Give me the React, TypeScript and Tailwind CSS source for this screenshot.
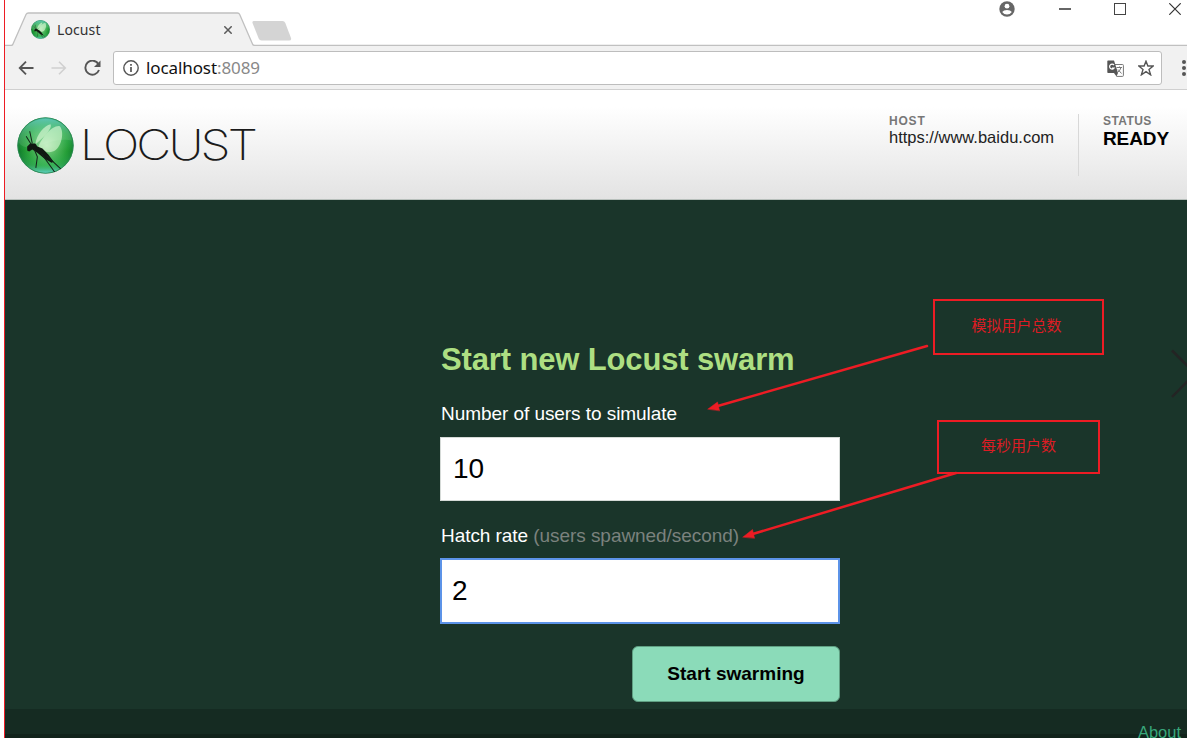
import type { ReactNode } from "react";

function LocustBall({ className, id }: { className: string; id: string }) {
  return (
    <svg viewBox="0 0 56 56" className={className} aria-hidden="true">
      <defs>
        <radialGradient id={`${id}-body`} cx="0.52" cy="0.5" r="0.52">
          <stop offset="0" stopColor="#c6f4c4" />
          <stop offset="0.35" stopColor="#6fd078" />
          <stop offset="0.72" stopColor="#2ba83c" />
          <stop offset="1" stopColor="#0f7a2e" />
        </radialGradient>
        <linearGradient id={`${id}-rim`} x1="0" y1="0" x2="0" y2="1">
          <stop offset="0" stopColor="#4fc4b4" stopOpacity="0.95" />
          <stop offset="0.28" stopColor="#4fc48a" stopOpacity="0.35" />
          <stop offset="0.6" stopColor="#0c7a20" stopOpacity="0.25" />
          <stop offset="0.85" stopColor="#45bd73" stopOpacity="0.4" />
          <stop offset="1" stopColor="#64d8d0" stopOpacity="0.95" />
        </linearGradient>
      </defs>
      <circle cx="28" cy="28" r="27.6" fill={`url(#${id}-body)`} />
      <circle cx="28" cy="28" r="27.2" fill={`url(#${id}-rim)`} stroke="#2f8a5c" strokeWidth="0.7" />
      <path d="M1.5 25C8 33 17 30 28 26C39 22 48 22 54 23C52 10 41 2 28 2C14 2 3 11 1.5 25Z" fill="#fff" opacity="0.1" />
      <path d="M18 27C19 17 27 8 33 7C35 11 27 19 18 27Z" fill="#dcf8d6" opacity="0.65" />
      <path d="M21 29C25 20 34 8 42 9C47 14 44 31 35 34C30 36 24 33 21 29Z" fill="#e2fbdc" opacity="0.6" />
      <path d="M10 29L13 26L18 26L20 29L25 31L31 37L36 44L34 45L27 41L20 35L15 32L12 34L10 33Z" fill="#101812" />
      <path d="M14 27L9 19M15 26L12.5 14M17 32L20 39L18.5 50M24 36L37 54M29 38L43 51" fill="none" stroke="#13241a" strokeWidth="1" />
    </svg>
  );
}

function TabStrip() {
  return (
    <div className="relative flex h-[46px] shrink-0 justify-between bg-white">
      <svg className="absolute inset-0 h-[46px] w-full" aria-hidden="true">
        <path d="M0 45.5H6Q7.500 45.500 8 44L21 14.500Q21.700 13 23.500 13H232.500Q234 13 234.700 14.500L247.500 44Q248 45.500 250 45.500H1200V48H0Z" fill="#f1f1f1" />
        <path d="M0 45.500H6Q7.500 45.500 8 44L21 14.500Q21.700 13 23.500 13H232.500Q234 13 234.700 14.500L247.500 44Q248 45.500 250 45.500H1200" fill="none" stroke="#c0c0c0" strokeWidth="1.300" />
        <path d="M249 21H277.500Q279.500 21 280.300 23L286 38Q286.800 40.500 284 40.500H256.500Q254.500 40.500 253.700 38.500L247.500 23Q247 21 249 21Z" fill="#d4d4d4" />
      </svg>
      <div className="relative flex h-[33px] w-[230px] items-center self-end pl-[26px]">
        <LocustBall id="tab" className="size-[19px]" />
        <span className="ml-[7px] font-['Noto_Sans',sans-serif] text-[14px] leading-5 tracking-[0.1px] text-[#333]">Locust</span>
        <svg viewBox="0 0 8 8" className="ml-auto mr-[3px] size-2" stroke="#5a5a5a" strokeWidth="1.5" aria-hidden="true">
          <path d="M0.300 0.300L7.700 7.700M7.700 0.300L0.300 7.700" />
        </svg>
      </div>
      <div className="relative flex h-[17px] items-center">
        <svg viewBox="0 0 16 16" className="mr-[44px] size-4" aria-hidden="true">
          <circle cx="8" cy="8" r="7.700" fill="#666" />
          <circle cx="8" cy="5.200" r="2.400" fill="#fff" />
          <path d="M3.200 11Q4.500 9 8 9Q11.500 9 12.800 11Q11 13.500 8 13.500Q5 13.500 3.200 11Z" fill="#fff" />
        </svg>
        <span className="mr-[43px] h-[2px] w-[12px] bg-[#666]" />
        <span className="mr-[43px] size-[12px] border border-[#444]" />
        <svg viewBox="0 0 12 12" className="mr-[6px] size-3" stroke="#333" strokeWidth="1.200" aria-hidden="true">
          <path d="M0.300 0.300L11.700 11.700M11.700 0.300L0.300 11.700" />
        </svg>
      </div>
    </div>
  );
}

function AddressBar() {
  return (
    <div className="flex h-[44px] shrink-0 items-center border-b border-[#d0d0d0] bg-[#f1f1f1] pl-[13px]">
      <svg viewBox="0 0 16 14" className="mr-[17px] h-[14px] w-4" fill="none" stroke="#555" strokeWidth="1.800" aria-hidden="true">
        <path d="M15.500 7H1.500M8 0.700L1.700 7L8 13.300" />
      </svg>
      <svg viewBox="0 0 16 14" className="mr-[17px] h-[14px] w-4" fill="none" stroke="#d0d0d0" strokeWidth="1.600" aria-hidden="true">
        <path d="M0.500 7H14.500M8 0.700L14.300 7L8 13.300" />
      </svg>
      <svg viewBox="0 0 17 16" className="mr-[12px] h-4 w-[17px]" fill="none" stroke="#555" strokeWidth="1.900" aria-hidden="true">
        <path d="M14.500 4.200A7 7 0 1 0 15 10" />
        <path d="M16.500 0.500V7H10Z" fill="#555" stroke="none" />
      </svg>
      <div className="mt-px flex h-[34px] w-[1049px] items-center rounded-[3px] border border-[#bdbdbd] bg-white pl-[9px] pr-[7px]">
        <svg viewBox="0 0 16 16" className="size-4" fill="none" stroke="#555" strokeWidth="1.400" aria-hidden="true">
          <circle cx="8" cy="8" r="7.200" />
          <path d="M8 7V12M8 4V5.800" strokeWidth="1.700" />
        </svg>
        <span className="ml-[7px] font-['Noto_Sans',sans-serif] text-[17px] leading-6 tracking-[-0.100px] text-[#111]">
          localhost<span className="text-[#888]">:8089</span>
        </span>
        <svg viewBox="0 0 17 17" className="ml-auto h-[17px] w-[17px]" aria-hidden="true">
          <path d="M8 4.500H15.500Q16.400 4.500 16.400 5.400V15.500Q16.400 16.400 15.500 16.400H9.500" fill="#fff" stroke="#777" />
          <path d="M1 0.500H7L11 13H1Q0.300 13 0.300 12V1.500Q0.300 0.500 1 0.500Z" fill="#555" />
          <path d="M7 13L9.500 16.500L11 13Z" fill="#555" />
          <path d="M7 5A2.500 2.500 0 1 0 7.200 8H5" fill="none" stroke="#fff" strokeWidth="1.200" />
          <path d="M9.500 7.500H15M12.500 6.500V7.500M14 7.500Q13 11 10.500 12.500M11 9.500L14.500 13.500" fill="none" stroke="#777" strokeWidth="1" />
        </svg>
        <svg viewBox="0 0 16 16" className="ml-[14px] size-4" fill="none" stroke="#555" strokeWidth="1.400" aria-hidden="true">
          <path d="M8 1.200L9.900 6H15.300L11 9.400L12.600 14.800L8 11.600L3.400 14.800L5 9.400L0.700 6H6.100Z" />
        </svg>
      </div>
      <div className="ml-[20px] flex flex-col gap-[2px]">
        <span className="size-[4px] rounded-full bg-[#555]" />
        <span className="size-[4px] rounded-full bg-[#555]" />
        <span className="size-[4px] rounded-full bg-[#555]" />
      </div>
    </div>
  );
}

function SiteHeader() {
  return (
    <header className="flex h-[110px] shrink-0 border-b border-[#b8c0bc] bg-linear-to-b from-white from-15% to-[#e3e3e3]">
      <LocustBall id="logo" className="ml-[12px] mt-[27px] size-[57px]" />
      <svg className="ml-[10px] mt-[26px] h-[58px] w-[180px] overflow-visible">
        <text x="-4" y="43.500" textLength="175" lengthAdjust="spacingAndGlyphs" className="fill-[#1b1b1b] font-['Inter',sans-serif] text-[42px] font-extralight tracking-[-2.500px]">LOCUST</text>
      </svg>
      <div className="ml-auto mt-[24px] flex h-[62px] w-[298px]">
        <div className="w-[189px]">
          <div className="text-[12px] font-bold leading-[14px] tracking-[0.800px] text-[#777]">HOST</div>
          <div className="text-[16.500px] leading-[19px] text-[#222]">https://www.baidu.com</div>
        </div>
        <div className="border-l border-[#d8d8d8] pl-[24px]">
          <div className="text-[12px] font-bold leading-[14px] tracking-[0.400px] text-[#777]">STATUS</div>
          <div className="text-[19px] font-bold leading-[21px] tracking-[-0.100px] text-black">READY</div>
        </div>
      </div>
    </header>
  );
}

function Note({ className, children }: { className: string; children: ReactNode }) {
  return (
    <div className={`absolute flex items-center justify-center border-2 border-[#ed1c24] font-['Noto_Sans_CJK_SC',sans-serif] text-[15px] leading-5 text-[#dc1c24] ${className}`}>
      {children}
    </div>
  );
}

export default function App() {
  return (
    <div className="relative h-[738px] w-[1187px] overflow-hidden bg-white pl-[4px] font-['Liberation_Sans',Arial,sans-serif]">
      <div className="flex h-full flex-col border-l border-[#ed1c24]">
        <TabStrip />
        <AddressBar />
        <SiteHeader />
        <main className="flex-1 bg-[#1a352a] pl-[435px] pt-[140px]">
          <form className="w-[400px]" onSubmit={(e) => e.preventDefault()}>
            <h2 className="pl-px text-[31px] font-bold leading-[40px] tracking-[-0.140px] text-[#addf82]">Start new Locust swarm</h2>
            <label htmlFor="users" className="mt-[23px] block pl-px text-[19px] leading-[22px] tracking-[-0.060px] text-white">Number of users to simulate</label>
            <input id="users" defaultValue="10" className="mt-[12px] block h-[64px] w-full border border-[#d5dad7] bg-white pl-[12px] text-[28px] text-black outline-none" />
            <label htmlFor="rate" className="mt-[24px] block pl-px text-[19px] leading-[22px] tracking-[-0.060px] text-white">
              Hatch rate <span className="text-[#7b827e]">(users spawned/second)</span>
            </label>
            <input id="rate" defaultValue="2" className="mt-[11px] block h-[66px] w-full border-2 border-[#5c93e8] bg-white pl-[10px] text-[28px] text-black outline-none" />
            <button className="ml-auto mt-[22px] block h-[56px] w-[208px] rounded-[6px] border border-[#5f9f82] bg-[#8bdbb9] pt-px text-[19px] font-bold text-black">Start swarming</button>
          </form>
        </main>
        <footer className="h-[29px] shrink-0 border-b-4 border-[#11231b] bg-[#152b22] pr-[6px] pt-[13px] text-right text-[16.500px] leading-[20px] text-[#38a77b]">About</footer>
      </div>
      <Note className="left-[933px] top-[299px] h-[56px] w-[171px] pb-[4px] pr-[4px]">模拟用户总数</Note>
      <Note className="left-[937px] top-[420px] h-[54px] w-[163px] pb-[4px]">每秒用户数</Note>
      <svg className="pointer-events-none absolute inset-0 h-[738px] w-[1187px]" aria-hidden="true">
        <g stroke="#ed1c24" strokeWidth="2.500" strokeLinecap="round" fill="#ed1c24">
          <path d="M927 346L716 406.500" />
          <path d="M708 409L717.500 402L719.500 410.500Z" strokeWidth="0.500" />
          <path d="M956 473L751 534.500" />
          <path d="M743 537L752.500 529.500L754.500 538Z" strokeWidth="0.500" />
        </g>
        <path d="M1172 350.500L1195 373.500L1172 397" fill="none" stroke="#242424" strokeWidth="2.500" />
      </svg>
    </div>
  );
}
